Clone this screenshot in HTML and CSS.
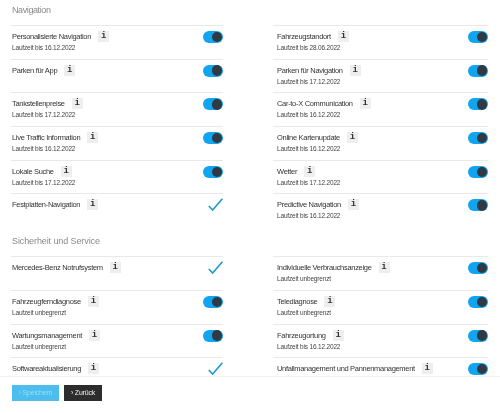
FILE: index.html
```html
<!DOCTYPE html>
<html lang="de">
<head>
<meta charset="utf-8">
<title>Dienste</title>
<link rel="stylesheet" href="styles.css">
</head>
<body>
<div class="page">
  <main class="content">
    <h2 class="title">Navigation</h2>
    <div class="grid">
      <div class="row"><div class="info"><div class="name">Personalisierte Navigation<span class="badge">i</span></div><div class="sub">Laufzeit bis 16.12.2022</div></div><span class="toggle"></span></div>
      <div class="row"><div class="info"><div class="name">Fahrzeugstandort<span class="badge">i</span></div><div class="sub">Laufzeit bis 28.06.2022</div></div><span class="toggle"></span></div>
      <div class="row"><div class="info"><div class="name">Parken für App<span class="badge">i</span></div></div><span class="toggle"></span></div>
      <div class="row"><div class="info"><div class="name">Parken für Navigation<span class="badge">i</span></div><div class="sub">Laufzeit bis 17.12.2022</div></div><span class="toggle"></span></div>
      <div class="row"><div class="info"><div class="name">Tankstellenpreise<span class="badge">i</span></div><div class="sub">Laufzeit bis 17.12.2022</div></div><span class="toggle"></span></div>
      <div class="row"><div class="info"><div class="name">Car-to-X Communication<span class="badge">i</span></div><div class="sub">Laufzeit bis 16.12.2022</div></div><span class="toggle"></span></div>
      <div class="row"><div class="info"><div class="name">Live Traffic Information<span class="badge">i</span></div><div class="sub">Laufzeit bis 16.12.2022</div></div><span class="toggle"></span></div>
      <div class="row"><div class="info"><div class="name">Online Kartenupdate<span class="badge">i</span></div><div class="sub">Laufzeit bis 16.12.2022</div></div><span class="toggle"></span></div>
      <div class="row"><div class="info"><div class="name">Lokale Suche<span class="badge">i</span></div><div class="sub">Laufzeit bis 17.12.2022</div></div><span class="toggle"></span></div>
      <div class="row"><div class="info"><div class="name">Wetter<span class="badge">i</span></div><div class="sub">Laufzeit bis 17.12.2022</div></div><span class="toggle"></span></div>
      <div class="row"><div class="info"><div class="name">Festplatten-Navigation<span class="badge">i</span></div></div><svg class="check" viewBox="0 0 15 13"><path d="M0.8 8 L4.6 12 L14.4 0.8"/></svg></div>
      <div class="row"><div class="info"><div class="name">Predictive Navigation<span class="badge">i</span></div><div class="sub">Laufzeit bis 16.12.2022</div></div><span class="toggle"></span></div>
    </div>
    <h2 class="title title-second">Sicherheit und Service</h2>
    <div class="grid">
      <div class="row"><div class="info"><div class="name">Mercedes-Benz Notrufsystem<span class="badge">i</span></div></div><svg class="check" viewBox="0 0 15 13"><path d="M0.8 8 L4.6 12 L14.4 0.8"/></svg></div>
      <div class="row"><div class="info"><div class="name">Individuelle Verbrauchsanzeige<span class="badge">i</span></div><div class="sub">Laufzeit unbegrenzt</div></div><span class="toggle"></span></div>
      <div class="row"><div class="info"><div class="name">Fahrzeugferndiagnose<span class="badge">i</span></div><div class="sub">Laufzeit unbegrenzt</div></div><span class="toggle"></span></div>
      <div class="row"><div class="info"><div class="name">Telediagnose<span class="badge">i</span></div><div class="sub">Laufzeit unbegrenzt</div></div><span class="toggle"></span></div>
      <div class="row"><div class="info"><div class="name">Wartungsmanagement<span class="badge">i</span></div><div class="sub">Laufzeit unbegrenzt</div></div><span class="toggle"></span></div>
      <div class="row"><div class="info"><div class="name">Fahrzeugortung<span class="badge">i</span></div><div class="sub">Laufzeit bis 16.12.2022</div></div><span class="toggle"></span></div>
      <div class="row row-last"><div class="info"><div class="name">Softwareaktualisierung<span class="badge">i</span></div></div><svg class="check" viewBox="0 0 15 13"><path d="M0.8 8 L4.6 12 L14.4 0.8"/></svg></div>
      <div class="row row-last"><div class="info"><div class="name">Unfallmanagement und Pannenmanagement<span class="badge">i</span></div></div><span class="toggle"></span></div>
    </div>
  </main>
  <footer class="footer">
    <button class="btn btn-save">› Speichern</button>
    <button class="btn btn-back">› Zurück</button>
  </footer>
</div>
</body>
</html>
```
FILE: styles.css
```css
* { box-sizing: border-box; }
html, body { margin: 0; height: 100%; background: #fff; overflow: hidden; }
body { font-family: "Liberation Sans", Arial, sans-serif; color: #333; }
.page { width: 500px; height: 413px; display: flex; flex-direction: column; filter: blur(0.3px); }
.content { height: 376px; overflow: hidden; padding-left: 11px; flex: none; }
.title { margin: 0; padding: 5px 0 0 1px; height: 25px; font-size: 9px; line-height: 11px; letter-spacing: -0.4px; font-weight: 400; color: #8a8a8a; }
.title-second { padding-top: 0; margin-top: 9px; height: 20px; letter-spacing: -0.1px; }
.grid { display: grid; grid-template-columns: 212px 215px; column-gap: 50px; grid-auto-rows: 33.7px; }
.row { border-top: 1px solid #e9e9e9; display: flex; justify-content: space-between; align-items: flex-start; padding: 5px 0 0 1px; }
.row:nth-child(even) { padding-left: 4px; }
.row-last { height: 19px; }
.name { font-size: 7.5px; line-height: 11px; letter-spacing: -0.31px; color: #333; display: flex; align-items: center; white-space: nowrap; }
.badge { width: 11px; height: 11px; margin-left: 7px; background: #eee; color: #333; font: 700 9px/11px "Liberation Mono", monospace; letter-spacing: 0; text-align: center; }
.sub { font-size: 6.5px; line-height: 9px; margin-top: 1px; letter-spacing: -0.17px; color: #444; white-space: nowrap; }
.toggle { width: 20px; height: 12px; border-radius: 6px; background: #10a5ee; display: flex; justify-content: flex-end; align-items: center; padding-right: 1px; }
.toggle::after { content: ""; width: 10.5px; height: 10.5px; border-radius: 50%; background: #2f3a44; }
.check { width: 15px; height: 13px; margin-top: -1.5px; overflow: visible; }
.check path { fill: none; stroke: #1b9dce; stroke-width: 1.6; }
.footer { flex: 1; border-top: 1px solid #f1f1f1; padding: 8px 0 0 12px; display: flex; align-items: flex-start; gap: 5px; }
.btn { border: 0; height: 16px; padding: 0; font: 7px/16px "Liberation Sans", Arial, sans-serif; letter-spacing: -0.2px; }
.btn-save { width: 47px; background: #4cbdec; color: #9adcf5; }
.btn-back { width: 38px; background: #2d2d2d; color: #f2f2f2; }
```
